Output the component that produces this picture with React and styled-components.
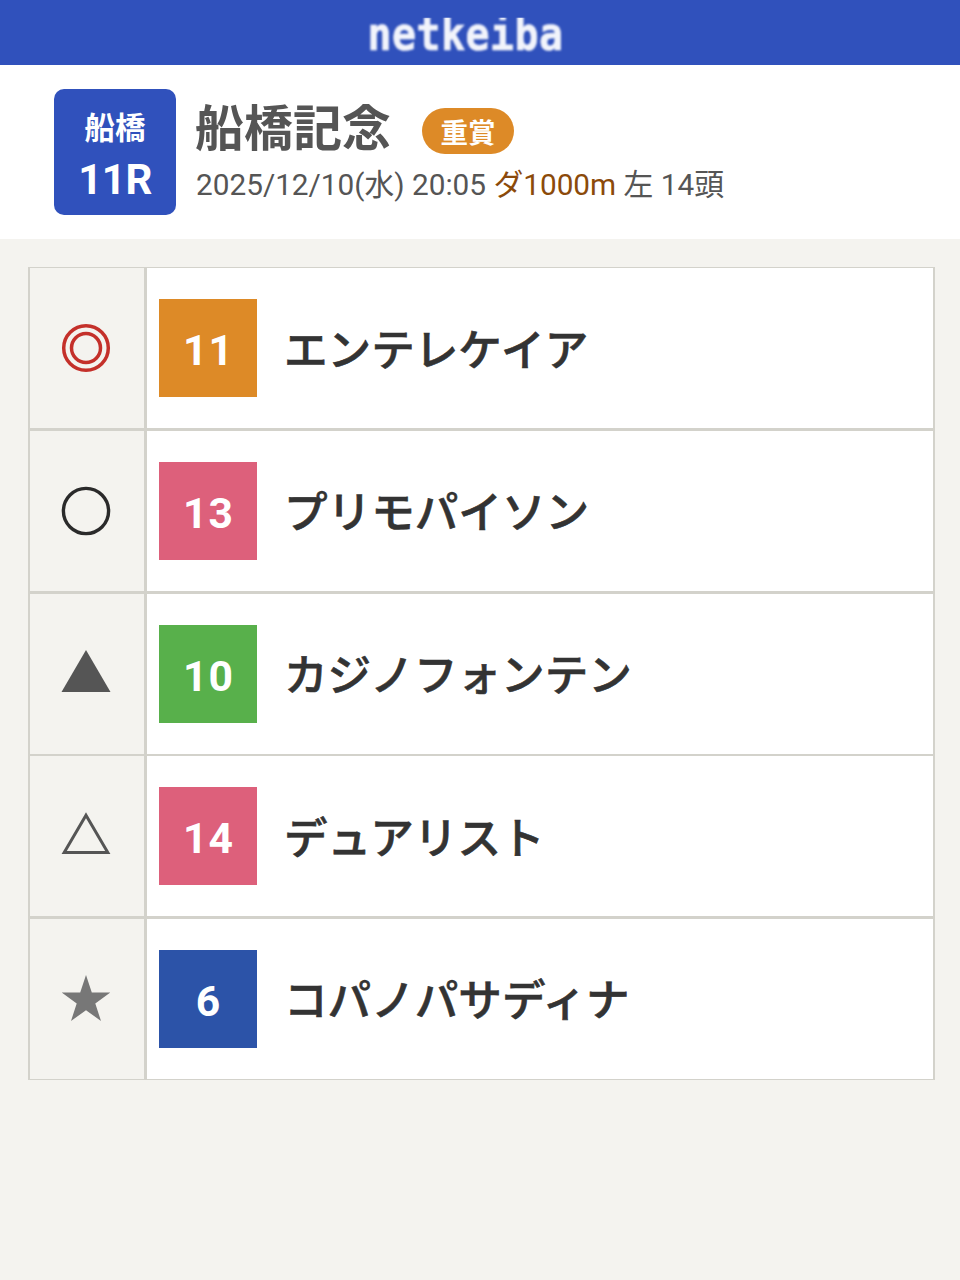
import React from 'react';
import styled, { createGlobalStyle } from 'styled-components';

const GlobalStyle = createGlobalStyle`
  html, body {
    margin: 0;
    padding: 0;
    background: #f4f3ef;
    font-family: Roboto, "Noto Sans CJK JP", sans-serif;
  }
`;

const horses = [
  { mark: 'double', number: 11, color: '#dd8a27', name: 'エンテレケイア' },
  { mark: 'circle', number: 13, color: '#dd607b', name: 'プリモパイソン' },
  { mark: 'filled', number: 10, color: '#58b04b', name: 'カジノフォンテン' },
  { mark: 'outline', number: 14, color: '#dd607b', name: 'デュアリスト' },
  { mark: 'star', number: 6, color: '#2c53a8', name: 'コパノパサディナ' },
];

const Mark = ({ type }) => (
  <svg width="52" height="52" viewBox="0 0 52 52">
    {type === 'double' && (
      <g fill="none" stroke="#c4302a" strokeWidth="3.5">
        <circle cx="26" cy="26" r="22.3" />
        <circle cx="26" cy="26" r="14.5" />
      </g>
    )}
    {type === 'circle' && (
      <circle cx="26" cy="26" r="22.6" fill="none" stroke="#2a2a2a" strokeWidth="3.4" />
    )}
    {type === 'filled' && <path d="M26 2 L50.5 44 H1.5 Z" fill="#555" />}
    {type === 'outline' && (
      <path d="M26 5.2 L47.8 42.5 H4.2 Z" fill="none" stroke="#555" strokeWidth="3" />
    )}
    {type === 'star' && (
      <path
        d="M26 2 L31.8 19.6 L50.3 19.6 L35.3 30.5 L41 48 L26 37.2 L11 48 L16.7 30.5 L1.7 19.6 L20.2 19.6 Z"
        fill="#777"
      />
    )}
  </svg>
);

const App = () => (
  <Page>
    <GlobalStyle />
    <TopBar>
      <Logo>netkeiba</Logo>
    </TopBar>

    <RaceHeader>
      <RaceBadge>
        <Venue>船橋</Venue>
        <RaceNumber>11R</RaceNumber>
      </RaceBadge>
      <RaceInfo>
        <TitleRow>
          <RaceTitle>船橋記念</RaceTitle>
          <Grade>重賞</Grade>
        </TitleRow>
        <Meta>
          2025/12/10(水) 20:05 <Course>ダ1000m</Course> 左 14頭
        </Meta>
      </RaceInfo>
    </RaceHeader>

    <Picks>
      {horses.map((horse) => (
        <Row key={horse.number}>
          <MarkCell>
            <Mark type={horse.mark} />
          </MarkCell>
          <HorseCell>
            <NumberBox color={horse.color}>{horse.number}</NumberBox>
            <HorseName>{horse.name}</HorseName>
          </HorseCell>
        </Row>
      ))}
    </Picks>
  </Page>
);

const Page = styled.div`
  min-height: 1280px;
  background: #f4f3ef;
`;

const TopBar = styled.header`
  height: 65px;
  background: #3051bc;
  display: flex;
  justify-content: center;
  align-items: center;
  padding-right: 29px;
  box-sizing: border-box;
  overflow: hidden;
`;

const Logo = styled.div`
  font-family: "DejaVu Sans Mono", monospace;
  font-weight: 700;
  font-size: 40px;
  letter-spacing: 0.4px;
  line-height: 65px;
  color: #f2f4fb;
  -webkit-text-stroke: 0.6px #f2f4fb;
  filter: blur(0.8px);
  transform: translateY(2px) scaleY(1.16);
  clip-path: inset(18px 0 0 0);
`;

const RaceHeader = styled.section`
  height: 174px;
  background: #fff;
  display: flex;
  align-items: center;
  padding-left: 54px;
  gap: 19px;
  box-sizing: border-box;
`;

const RaceBadge = styled.div`
  width: 122px;
  height: 126px;
  background: #3051bc;
  border-radius: 10px;
  color: #fff;
  display: flex;
  flex-direction: column;
  align-items: center;
  justify-content: center;
  gap: 8px;
  padding-top: 7px;
  box-sizing: border-box;
`;

const Venue = styled.div`
  font-size: 30.5px;
  font-weight: 700;
  line-height: 40px;
`;

const RaceNumber = styled.div`
  font-size: 42px;
  font-weight: 700;
  letter-spacing: -0.5px;
  line-height: 46px;
`;

const RaceInfo = styled.div`
  display: flex;
  flex-direction: column;
  gap: 5px;
`;

const TitleRow = styled.div`
  display: flex;
  align-items: center;
  gap: 31px;
`;

const RaceTitle = styled.h1`
  margin: 1px 0 0;
  font-size: 49px;
  font-weight: 700;
  line-height: 60px;
  color: #555;
`;

const Grade = styled.span`
  width: 92px;
  height: 46px;
  margin-top: 3px;
  border-radius: 23px;
  background: #dd8a27;
  color: #fff;
  font-size: 27.5px;
  font-weight: 700;
  display: flex;
  align-items: center;
  justify-content: center;
`;

const Meta = styled.div`
  margin-left: 1px;
  font-size: 29.75px;
  line-height: 40px;
  color: #555;
`;

const Course = styled.span`
  color: #8b4a0a;
`;

const Picks = styled.main`
  margin: 27.67px 25px 0 28px;
  padding: 1.67px 2px 1px;
  background: #d3d2cb;
  display: flex;
  flex-direction: column;
  gap: 2.67px;
`;

const Row = styled.div`
  display: grid;
  grid-template-columns: 114px 1fr;
  column-gap: 3px;
  height: 160px;
`;

const MarkCell = styled.div`
  background: #f4f3ef;
  display: flex;
  align-items: center;
  justify-content: center;
  padding-right: 2px;
`;

const HorseCell = styled.div`
  background: #fff;
  display: flex;
  align-items: center;
  gap: 27px;
  padding-left: 12px;
`;

const NumberBox = styled.div`
  width: 98px;
  height: 98px;
  padding: 4px 0 0 1px;
  box-sizing: border-box;
  background: ${(props) => props.color};
  color: #fff;
  font-size: 42.67px;
  font-weight: 700;
  letter-spacing: 1px;
  display: flex;
  align-items: center;
  justify-content: center;
`;

const HorseName = styled.div`
  padding-bottom: 3px;
  font-size: 43.6px;
  font-weight: 500;
  color: #333;
  -webkit-text-stroke: 0.6px #333;
`;

export default App;
